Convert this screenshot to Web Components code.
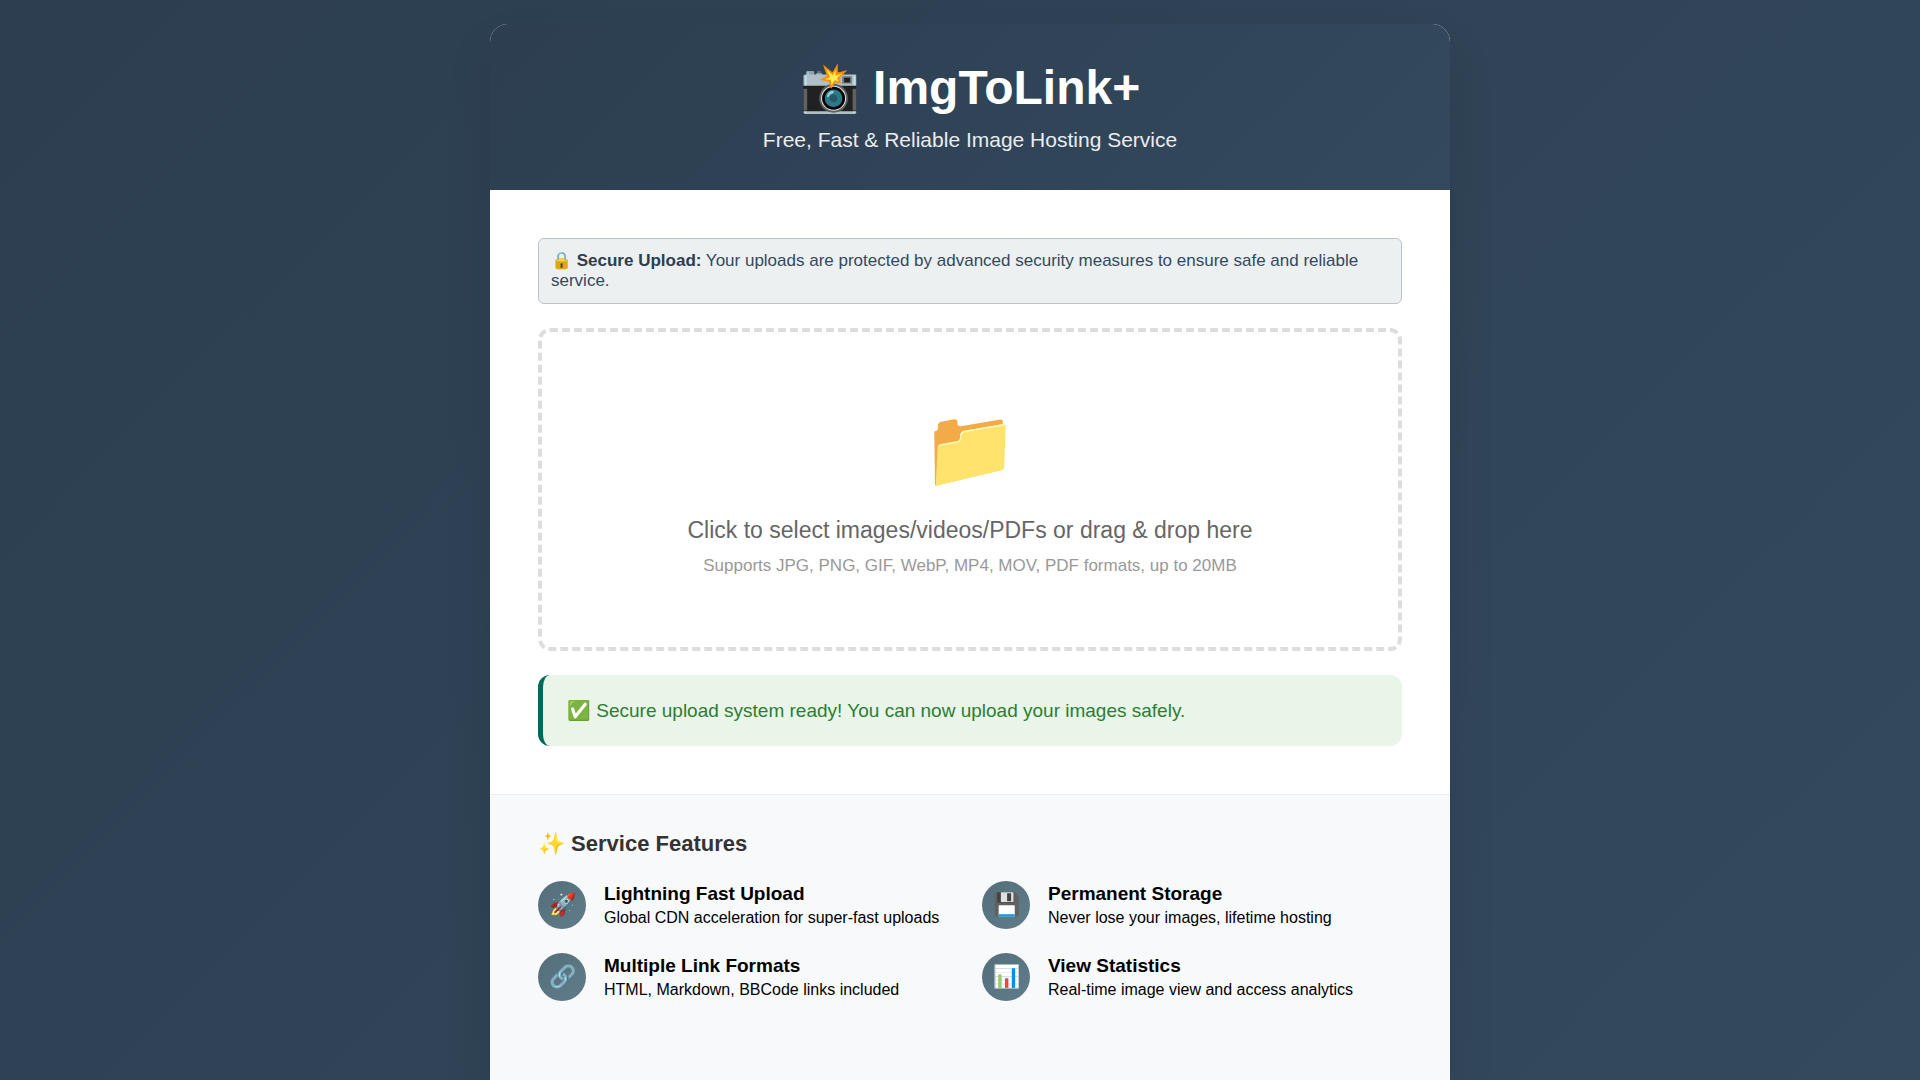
<!DOCTYPE html>
<html lang="en">
<head>
<meta charset="utf-8">
<meta name="viewport" content="width=device-width, initial-scale=1">
<title>ImgToLink+</title>
<style>
  html { background: #34495e; }
  body { margin: 0; font-family: "Liberation Sans", Arial, sans-serif; font-size: 19px; color: #000; }
</style>
</head>
<body>
<upload-page>
  <site-header slot="header" heading="📸 ImgToLink+">Free, Fast &amp; Reliable Image Hosting Service</site-header>
  <secure-note><strong>Secure Upload:</strong> Your uploads are protected by advanced security measures to ensure safe and reliable service.</secure-note>
  <drop-zone>
    <span slot="title">Click to select images/videos/PDFs or drag &amp; drop here</span>
    <span slot="hint">Supports JPG, PNG, GIF, WebP, MP4, MOV, PDF formats, up to 20MB</span>
  </drop-zone>
  <status-message>✅ Secure upload system ready! You can now upload your images safely.</status-message>
  <feature-list slot="features" heading="✨ Service Features">
    <feature-item icon="🚀" name="Lightning Fast Upload">Global CDN acceleration for super-fast uploads</feature-item>
    <feature-item icon="💾" name="Permanent Storage">Never lose your images, lifetime hosting</feature-item>
    <feature-item icon="🔗" name="Multiple Link Formats">HTML, Markdown, BBCode links included</feature-item>
    <feature-item icon="📊" name="View Statistics">Real-time image view and access analytics</feature-item>
  </feature-list>
</upload-page>

<script>
(function () {
  // registers an element whose shadow root is built from an html string
  const define = (name, html, setup) => {
    const tpl = document.createElement('template');
    tpl.innerHTML = html;
    customElements.define(name, class extends HTMLElement {
      connectedCallback() {
        if (this.shadowRoot) return;
        const root = this.attachShadow({ mode: 'open' });
        root.append(tpl.content.cloneNode(true));
        if (setup) setup(this, root);
      }
    });
  };

  define('upload-page', `
<style>
  :host { display: flex; justify-content: center; box-sizing: border-box; min-height: 100vh;
    padding: 24px 0 0 20px; background: linear-gradient(135deg, #2c3e50 0%, #34495e 100%); }
  .card { display: flex; flex-direction: column; width: 100%; max-width: 960px; overflow: hidden;
    background: #fff; border-radius: 18px 18px 0 0; box-shadow: 0 24px 48px rgba(0,0,0,.1); }
  main { display: flex; flex-direction: column; gap: 24px; padding: 48px; }
  ::slotted(feature-list) { flex: 1; }
</style>
<div class="card">
  <slot name="header"></slot>
  <main><slot></slot></main>
  <slot name="features"></slot>
</div>`);

  define('site-header', `
<style>
  :host { display: block; padding: 36px 36px 38px; text-align: center; color: #fff;
    background: linear-gradient(135deg, #2c3e50 0%, #34495e 100%); }
  h1 { margin: 0 0 12px; font-size: 48px; line-height: 55px; }
  p { margin: 0; font-size: 21px; line-height: 25px; opacity: .9; }
</style>
<header><h1></h1><p><slot></slot></p></header>`, (el, root) => {
    root.querySelector('h1').textContent = el.getAttribute('heading');
  });

  define('secure-note', `
<style>
  :host { display: block; padding: 12px; border: 1px solid #bdc3c7; border-radius: 6px;
    background: #ecf0f1; color: #34495e; font-size: 17px; line-height: 20px; }
  ::slotted(strong) { color: #2c3e50; }
</style>
🔒 <slot></slot>`);

  define('drop-zone', `
<style>
  :host { display: block; }
  button { display: block; width: 100%; padding: 71px 48px; border: 4px dashed #ddd; border-radius: 12px;
    background: none; font: inherit; text-align: center; cursor: pointer; }
  button:hover, button.over { border-color: #34495e; background: #f8f9fa; }
  .icon { display: block; margin-bottom: 24px; font-size: 77px; line-height: 90px; }
  .title { display: block; margin-bottom: 12px; font-size: 23px; line-height: 26px; color: #666; }
  .hint { display: block; font-size: 17px; line-height: 21px; color: #999; }
</style>
<button type="button">
  <span class="icon">📁</span>
  <span class="title"><slot name="title"></slot></span>
  <span class="hint"><slot name="hint"></slot></span>
</button>
<input type="file" accept="image/*,video/*,application/pdf" aria-label="Files" multiple hidden>`, (el, root) => {
    const btn = root.querySelector('button'), input = root.querySelector('input');
    btn.addEventListener('click', () => input.click());
    btn.addEventListener('dragover', (e) => { e.preventDefault(); btn.classList.add('over'); });
    btn.addEventListener('dragleave', () => btn.classList.remove('over'));
    btn.addEventListener('drop', (e) => {
      e.preventDefault();
      btn.classList.remove('over');
      input.files = e.dataTransfer.files;
    });
  });

  define('status-message', `
<style>
  :host { display: block; padding: 24px; border-left: 5px solid #00695c; border-radius: 12px;
    background: #e8f5e8; color: #2e7d32; font-size: 19px; line-height: 23px; }
</style>
<div role="status"><slot></slot></div>`);

  define('feature-list', `
<style>
  :host { display: block; padding: 36px 48px; border-top: 1px solid #eee; background: #f8f9fb; }
  h2 { margin: 0 0 24px; font-size: 22px; line-height: 26px; color: #333; }
  .grid { display: grid; grid-template-columns: repeat(auto-fit, minmax(300px, 1fr)); gap: 24px; }
</style>
<section><h2></h2><div class="grid"><slot></slot></div></section>`, (el, root) => {
    root.querySelector('h2').textContent = el.getAttribute('heading');
  });

  define('feature-item', `
<style>
  :host { display: flex; align-items: center; gap: 18px; }
  .icon { display: flex; flex: none; align-items: center; justify-content: center; width: 48px; height: 48px;
    border-radius: 50%; background: linear-gradient(135deg, #546e7a, #607d8b); color: #fff; font-size: 22px; }
  strong { display: block; margin-bottom: 2px; font-size: 19px; line-height: 23px; }
  .desc { font-size: 16px; line-height: 22px; }
</style>
<span class="icon"></span>
<div><strong></strong><div class="desc"><slot></slot></div></div>`, (el, root) => {
    root.querySelector('.icon').textContent = el.getAttribute('icon');
    root.querySelector('strong').textContent = el.getAttribute('name');
  });
})();
</script>
</body>
</html>
